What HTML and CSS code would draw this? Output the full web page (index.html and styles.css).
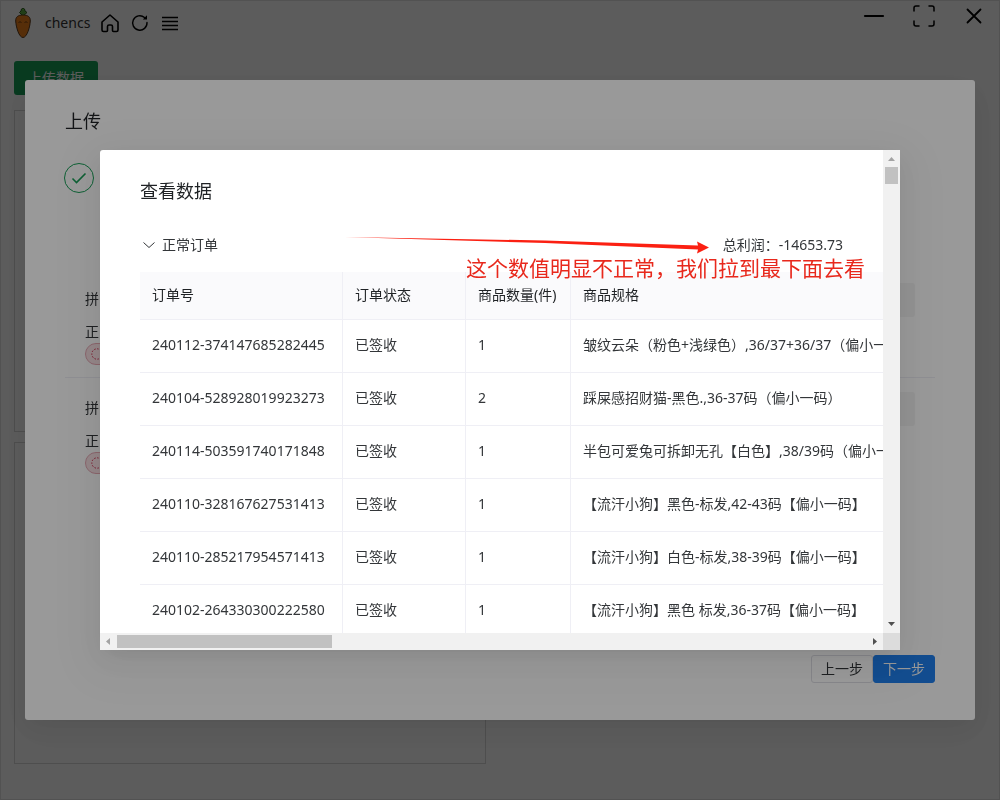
FILE: index.html
```html
<!DOCTYPE html>
<html lang="zh-CN">
<head>
<meta charset="utf-8">
<title>chencs</title>
<link rel="stylesheet" href="styles.css">
</head>
<body>
<div class="window">
  <header class="titlebar">
    <svg class="logo" viewBox="0 0 16 30" width="16" height="30">
      <path d="M8 8 L4.500 4.500 L6 3 L6.500 1 L8 0 L9.500 1 L10 3 L12 4.500 Z" fill="#6cc04a" stroke="#2c5a20" stroke-width="1"/>
      <path d="M8 7 C3 7 .5 9 .7 13 C1 19 4 29.500 8 29.500 C12 29.500 15 19 15.300 13 C15.500 9 13 7 8 7 Z" fill="#ee7f1b" stroke="#5a3a1c" stroke-width="1"/>
      <path d="M3.500 14.500 Q5 13 6.500 14.500 M9.500 14.500 Q11 13 12.500 14.500" fill="none" stroke="#7a4312" stroke-width="1"/>
      <path d="M7 1.500 V7 M9 2 V7" stroke="#3b7a2a" stroke-width=".6"/>
    </svg>
    <span class="user">chencs</span>
    <nav class="tools">
      <button class="icon-btn" aria-label="主页"><svg viewBox="0 0 20 20" width="20" height="20"><path d="M2 9 L10 2 L18 9 V17 Q18 18.500 16.500 18.500 H13.500 Q12.500 18.500 12.500 17.500 V13.500 Q12.500 12 11 12 H9 Q7.500 12 7.500 13.500 V17.500 Q7.500 18.500 6.500 18.500 H3.500 Q2 18.500 2 17 Z" fill="none" stroke="#000" stroke-width="1.600" stroke-linejoin="round"/></svg></button>
      <button class="icon-btn" aria-label="刷新"><svg viewBox="0 0 20 20" width="20" height="20"><path d="M17 9.500 A7.200 7.200 0 1 1 14.500 4.500" fill="none" stroke="#000" stroke-width="1.400" stroke-linecap="round"/><path d="M17 2.300 V6.500 H12.800 Z" fill="#000"/></svg></button>
      <button class="icon-btn" aria-label="菜单"><svg viewBox="0 0 20 20" width="20" height="20"><path d="M2 4.500 H18 M2 8.500 H18 M2 12.500 H18 M2 16.500 H18" stroke="#000" stroke-width="1.300"/></svg></button>
    </nav>
    <div class="controls">
      <button class="icon-btn" aria-label="最小化"><svg viewBox="0 0 24 24" width="24" height="24"><path d="M3 12 H21" stroke="#000" stroke-width="2.200" stroke-linecap="round"/></svg></button>
      <button class="icon-btn" aria-label="全屏"><svg viewBox="0 0 24 24" width="24" height="24"><path d="M2 7 V4 Q2 2 4 2 H7 M17 2 H20 Q22 2 22 4 V7 M22 17 V20 Q22 22 20 22 H17 M7 22 H4 Q2 22 2 20 V17" fill="none" stroke="#000" stroke-width="1.500" stroke-linecap="round"/></svg></button>
      <button class="icon-btn" aria-label="关闭"><svg viewBox="0 0 24 24" width="24" height="24"><path d="M5.500 5.500 L18.500 18.500 M18.500 5.500 L5.500 18.500" stroke="#000" stroke-width="1.800" stroke-linecap="round"/></svg></button>
    </div>
  </header>
  <main class="page">
    <button class="btn-green">上传数据</button>
    <div class="panels">
      <section class="panel"></section>
      <section class="panel"></section>
    </div>
  </main>
</div>

<div class="mask">
  <section class="dialog upload" role="dialog" aria-labelledby="upload-title">
    <h2 class="dialog-title" id="upload-title">上传</h2>
    <div class="step"><svg viewBox="0 0 30 30" width="30" height="30"><circle cx="15" cy="15" r="14.500" fill="none" stroke="#18a058"/><path d="M8.500 15.500 L12.500 19.500 L21.500 10.500" fill="none" stroke="#18a058" stroke-width="1.600"/></svg></div>
    <ul class="shops">
      <li class="shop">
        <div class="shop-info"><span class="shop-name">拼多多</span><span>正常</span><span class="tag"><svg viewBox="0 0 12 12" width="12" height="12"><circle cx="6" cy="6" r="5.200" fill="none" stroke="#d03050" stroke-dasharray="1.500 1.500"/></svg></span></div>
        <button class="more">—</button>
      </li>
      <li class="shop">
        <div class="shop-info"><span class="shop-name">拼多多</span><span>正常</span><span class="tag"><svg viewBox="0 0 12 12" width="12" height="12"><circle cx="6" cy="6" r="5.200" fill="none" stroke="#d03050" stroke-dasharray="1.500 1.500"/></svg></span></div>
        <button class="more">—</button>
      </li>
    </ul>
    <footer class="actions">
      <button class="btn">上一步</button>
      <button class="btn btn-blue">下一步</button>
    </footer>
  </section>
</div>

<div class="mask">
  <section class="dialog viewer" role="dialog" aria-labelledby="view-title">
    <div class="viewport">
      <h2 class="dialog-title" id="view-title">查看数据</h2>
      <div class="group">
        <button class="toggle"><svg viewBox="0 0 14 14" width="14" height="14"><path d="M1.500 4.500 L7 9.500 L12.500 4.500" fill="none" stroke="#333639" stroke-width="1"/></svg>正常订单</button>
        <span>总利润：-14653.73</span>
      </div>
      <table class="orders">
        <colgroup><col class="c-id"><col class="c-state"><col class="c-count"><col class="c-spec"></colgroup>
        <thead><tr><th>订单号</th><th>订单状态</th><th>商品数量(件)</th><th>商品规格</th></tr></thead>
        <tbody>
          <tr><td>240112-374147685282445</td><td>已签收</td><td>1</td><td>皱纹云朵（粉色+浅绿色）,36/37+36/37（偏小一码）</td></tr>
          <tr><td>240104-528928019923273</td><td>已签收</td><td>2</td><td>踩屎感招财猫-黑色.,36-37码（偏小一码）</td></tr>
          <tr><td>240114-503591740171848</td><td>已签收</td><td>1</td><td>半包可爱兔可拆卸无孔【白色】,38/39码（偏小一码）</td></tr>
          <tr><td>240110-328167627531413</td><td>已签收</td><td>1</td><td>【流汗小狗】黑色-标发,42-43码【偏小一码】</td></tr>
          <tr><td>240110-285217954571413</td><td>已签收</td><td>1</td><td>【流汗小狗】白色-标发,38-39码【偏小一码】</td></tr>
          <tr><td>240102-264330300222580</td><td>已签收</td><td>1</td><td>【流汗小狗】黑色 标发,36-37码【偏小一码】</td></tr>
        </tbody>
      </table>
    </div>
    <div class="scroll-y">
      <svg viewBox="0 0 17 17" width="17" height="17"><path d="M5 11 L8.500 7 L12 11 Z" fill="#a3a3a3"/></svg>
      <div class="thumb-y"></div>
      <svg class="arrow-end" viewBox="0 0 17 17" width="17" height="17"><path d="M5 6 H12 L8.500 10 Z" fill="#505050"/></svg>
    </div>
    <div class="scroll-x">
      <svg viewBox="0 0 17 17" width="17" height="17"><path d="M10 5 V12 L6 8.500 Z" fill="#a3a3a3"/></svg>
      <div class="thumb-x"></div>
      <svg class="arrow-end" viewBox="0 0 17 17" width="17" height="17"><path d="M7 5 V12 L11 8.500 Z" fill="#505050"/></svg>
    </div>
    <div class="corner"></div>
    <svg class="mark-arrow" viewBox="0 0 364 20" width="364" height="20"><path d="M0 3 L200 6.500 L353 11.500 L352 7.500 L364 13.500 L352 19.500 L353 15.500 L200 9 Z" fill="#fb2012"/></svg>
    <p class="mark-text">这个数值明显不正常，我们拉到最下面去看</p>
  </section>
</div>
</body>
</html>
```
FILE: styles.css
```css
* { box-sizing: border-box; }
body {
  margin: 0;
  font: 14px/22px "Noto Sans", "Noto Sans CJK SC", sans-serif;
  color: #333639;
  background: #fff;
}
button { font: inherit; color: inherit; border: 0; padding: 0; background: none; cursor: pointer; }
svg { display: block; }

.window { min-height: 100vh; border: 1px solid #e4e4e4; padding: 0 13px; background: #fff; }
.titlebar { display: flex; align-items: flex-start; height: 60px; }
.logo { margin: 7px 0 0 1px; }
.user { margin: 11px 10px 0 14px; color: #333; }
.tools { display: flex; gap: 10px; margin-top: 12px; }
.controls { display: flex; gap: 26px; margin: 3px 0 0 auto; }
.btn-green { height: 34px; padding: 0 14px; border-radius: 3px; background: #18a058; color: #fff; }
.page { display: flex; flex-direction: column; align-items: flex-start; gap: 15px; }
.panels { width: calc(50% - 14px); display: grid; gap: 10px; }
.panel { height: 322px; border: 1px solid #d8d8d8; }

.mask {
  position: fixed;
  inset: 0;
  display: grid;
  place-items: center;
  background: rgba(0, 0, 0, 0.4);
}
.dialog {
  background: #fff;
  border-radius: 3px;
  box-shadow: 0 6px 16px -9px rgba(0, 0, 0, 0.08), 0 9px 28px 0 rgba(0, 0, 0, 0.05), 0 12px 48px 16px rgba(0, 0, 0, 0.03);
}
.dialog-title { margin: 0; font-size: 18px; line-height: 28px; font-weight: 400; color: #1f2225; }

.upload { width: 95%; height: 80%; padding: 27px 40px 37px; display: flex; flex-direction: column; }
.step { margin: 28px 0 76px -1px; }
.shops { list-style: none; margin: 0; padding: 0; }
.shop { display: flex; align-items: center; justify-content: space-between; padding: 18px 20px 12px; border-bottom: 1px solid #efeff5; height: 109px; }
.shop:last-child { border: 0; }
.shop-info { display: flex; flex-direction: column; align-items: flex-start; }
.shop-name { margin-bottom: 11px; }
.tag { display: flex; align-items: center; height: 22px; width: 80px; padding: 0 5px; border: 1px solid #e8a9b5; border-radius: 11px; background: #f8e1e5; }
.more { align-self: flex-start; width: 40px; height: 34px; margin-top: -4px; padding-right: 6px; border-radius: 3px; background: #f5f5f5; color: #18a058; }
.actions { display: flex; justify-content: flex-end; margin-top: auto; }
.btn { height: 28px; padding: 0 9px; border: 1px solid #e0e0e6; border-radius: 3px; }
.btn-blue { background: #2080f0; border-color: #2080f0; color: #fff; }

.viewer {
  position: relative;
  width: 80%;
  height: 62.5%;
  display: grid;
  grid-template: minmax(0, 1fr) 17px / minmax(0, 1fr) 17px;
}
.viewport { overflow: hidden; padding: 27px 40px 0; }
.group { display: flex; justify-content: space-between; margin: 29px 0 16px; }
.toggle { display: flex; align-items: center; gap: 6px; padding-left: 2px; }
.orders { width: 1200px; table-layout: fixed; border-collapse: separate; border-spacing: 0; white-space: nowrap; }
.c-id { width: 203px; }
.c-state { width: 123px; }
.c-count { width: 105px; }
.orders th, .orders td {
  height: 53px;
  padding: 0 12px 2px;
  text-align: left;
  font-weight: 400;
  border-bottom: 1px solid #efeff5;
  border-right: 1px solid #efeff5;
}
.orders th { height: 48px; background: #fafafc; color: #1f2225; }
.scroll-y { display: flex; flex-direction: column; align-items: center; background: #f1f1f1; }
.scroll-x { display: flex; align-items: center; background: #f1f1f1; }
.scroll-y .arrow-end { margin-top: auto; }
.scroll-x .arrow-end { margin-left: auto; }
.thumb-y { width: 13px; height: 17px; background: #c1c1c1; }
.thumb-x { width: 215px; height: 13px; background: #c1c1c1; }
.corner { background: #dcdcdc; }
.mark-arrow { position: absolute; left: 245px; top: 84px; }
.mark-text {
  position: absolute;
  left: 366px;
  top: 103px;
  margin: 0;
  font-size: 21px;
  line-height: 30px;
  color: #e8281c;
  white-space: nowrap;
}
```
